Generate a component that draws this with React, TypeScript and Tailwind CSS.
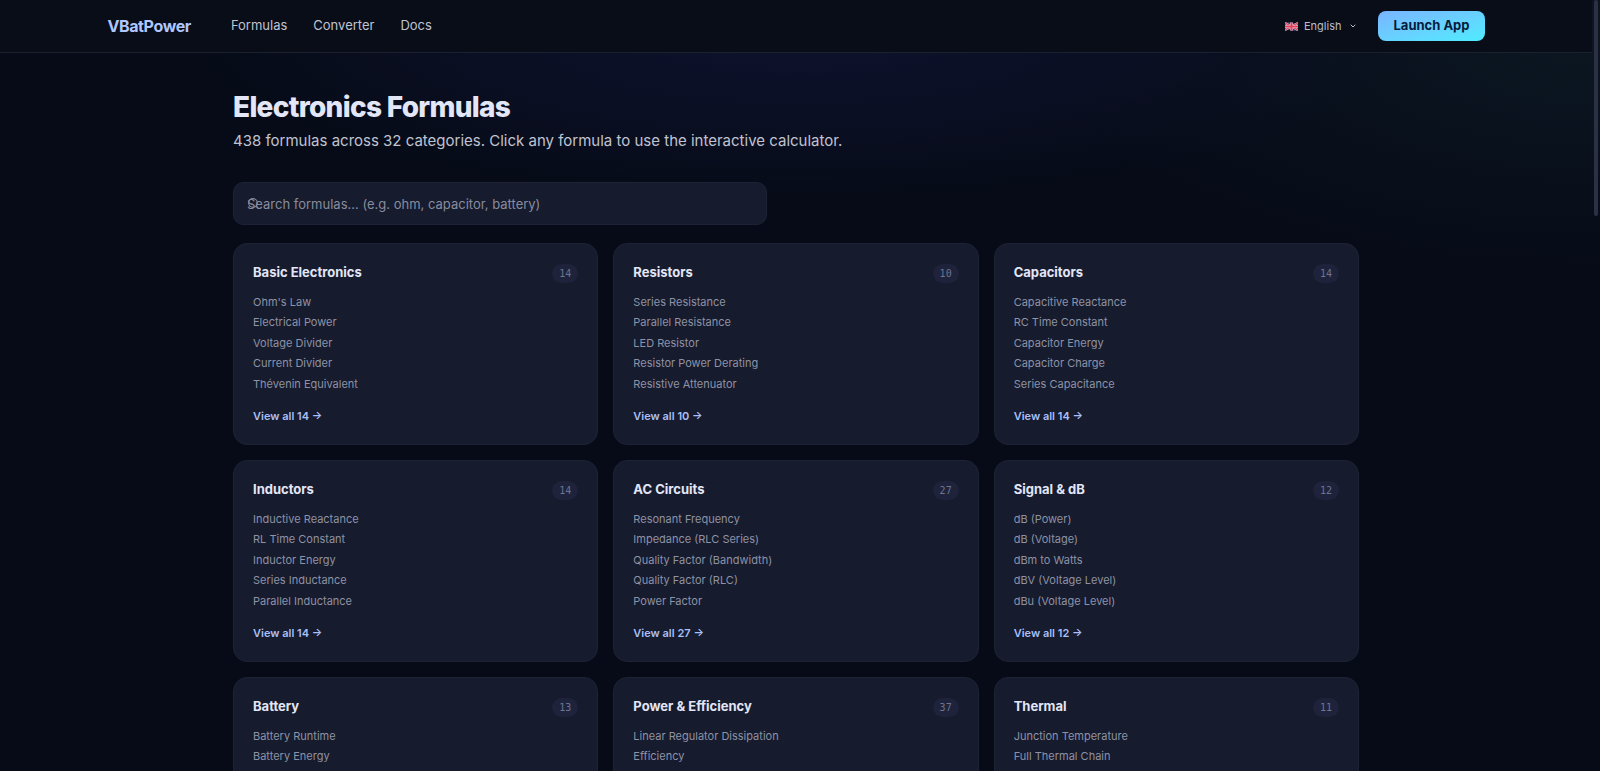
import React from "react";
import { ChevronDown, Search } from "lucide-react";

type Category = { name: string; count: number; formulas: string[] };

const PREVIEW_SIZE = 5;

const categories: Category[] = [
  { name: "Basic Electronics", count: 14, formulas: ["Ohm's Law", "Electrical Power", "Voltage Divider", "Current Divider", "Thévenin Equivalent"] },
  { name: "Resistors", count: 10, formulas: ["Series Resistance", "Parallel Resistance", "LED Resistor", "Resistor Power Derating", "Resistive Attenuator"] },
  { name: "Capacitors", count: 14, formulas: ["Capacitive Reactance", "RC Time Constant", "Capacitor Energy", "Capacitor Charge", "Series Capacitance"] },
  { name: "Inductors", count: 14, formulas: ["Inductive Reactance", "RL Time Constant", "Inductor Energy", "Series Inductance", "Parallel Inductance"] },
  { name: "AC Circuits", count: 27, formulas: ["Resonant Frequency", "Impedance (RLC Series)", "Quality Factor (Bandwidth)", "Quality Factor (RLC)", "Power Factor"] },
  { name: "Signal & dB", count: 12, formulas: ["dB (Power)", "dB (Voltage)", "dBm to Watts", "dBV (Voltage Level)", "dBu (Voltage Level)"] },
  { name: "Battery", count: 13, formulas: ["Battery Runtime", "Battery Energy"] },
  { name: "Power & Efficiency", count: 37, formulas: ["Linear Regulator Dissipation", "Efficiency"] },
  { name: "Thermal", count: 11, formulas: ["Junction Temperature", "Full Thermal Chain"] },
];

function Flag() {
  return (
    <svg className="h-[9px] w-[13px]" viewBox="0 0 60 40" aria-hidden="true">
      <path d="M0 3Q15-2 30 3T60 3V37Q45 42 30 37T0 37Z" fill="#33417f" />
      <path d="M0 3L60 37M60 3L0 37" stroke="#e4d3dc" strokeWidth="9" />
      <path d="M0 3L60 37M60 3L0 37" stroke="#e0405c" strokeWidth="5" />
      <path d="M30 1V39M0 20H60" stroke="#e4d3dc" strokeWidth="13" />
      <path d="M30 1V39M0 20H60" stroke="#e0405c" strokeWidth="9" />
    </svg>
  );
}

function Header() {
  return (
    <header className="border-b border-[#1b2130] bg-[#080d18]">
      <div className="mx-auto flex h-[52px] max-w-[1377px] items-center">
        <a href="#home" className="text-[16px] font-bold tracking-tight text-[#b0c6ff]">VBatPower</a>
        <nav className="ml-10 flex gap-[26px] text-[13px] text-[#c0c3d0]">
          <a href="#formulas">Formulas</a>
          <a href="#converter">Converter</a>
          <a href="#docs">Docs</a>
        </nav>
        <button type="button" className="ml-auto flex items-center gap-[6px] text-[11px] text-[#b9bcca]">
          <Flag />
          English
          <ChevronDown className="ml-[2px] size-[8px]" strokeWidth={3} />
        </button>
        <a href="#app" className="ml-[21px] flex h-[30px] items-center rounded-lg bg-linear-to-br from-[#78b4ff] to-[#4cecff] px-[15px] text-[13px] font-bold text-[#071b3d]">
          Launch App
        </a>
      </div>
    </header>
  );
}

function CategoryCard({ name, count, formulas }: Category) {
  return (
    <article className="rounded-[14px] border border-[#1d2235] bg-[#161b2d] px-[19px] pt-[19px] pb-[19px]">
      <div className="flex h-5 items-center justify-between">
        <h2 className="text-[13px] font-bold text-[#e3e6f7]">{name}</h2>
        <span className="rounded-full bg-[#1e223a] px-[7px] font-['DejaVu_Sans_Mono',monospace] text-[10px] leading-[19px] text-[#6f7590]">{count}</span>
      </div>
      <ul className="mt-[9px] grid h-[102px] grid-rows-5 items-center text-[11px] text-[#8e92a5]">
        {formulas.map((f) => (
          <li key={f}>
            <a href="#formula">{f}</a>
          </li>
        ))}
      </ul>
      {formulas.length === PREVIEW_SIZE && (
        <a href="#category" className="mt-[13px] block text-[11px] leading-[18px] font-semibold text-[#a9bff5]">
          View all {count} →
        </a>
      )}
    </article>
  );
}

export default function App() {
  return (
    <div className="flex h-screen overflow-hidden bg-[#060b17] bg-[radial-gradient(ellipse_620px_170px_at_50%_30px,#0e122c_0%,#0b0f24_50%,transparent_100%),radial-gradient(ellipse_560px_230px_at_100%_40px,#0c1722_0%,transparent_100%)] font-['Inter',sans-serif]">
      <div className="min-w-0 flex-1">
        <Header />
        <main className="mx-auto max-w-[1126px] pt-9">
          <h1 className="text-[28px] leading-[36px] font-extrabold tracking-tight text-[#e3e6f7]">Electronics Formulas</h1>
          <p className="mt-[4px] text-[15px] leading-[24px] text-[#c0c3d0]">
            438 formulas across 32 categories. Click any formula to use the interactive calculator.
          </p>
          <div className="relative mt-[29px] max-w-[534px]">
            <Search className="absolute top-[15px] left-[14px] size-[13px] text-[#8a8ea3]" strokeWidth={2} />
            <input
              type="search"
              aria-label="Search formulas"
              placeholder="Search formulas... (e.g. ohm, capacitor, battery)"
              className="block h-[43px] w-full rounded-[10px] border border-[#1d2235] bg-[#161b2d] px-[13px] text-[13px] text-[#e3e6f7] placeholder:text-[#888c9f]"
            />
          </div>
          <div className="mt-[18px] grid grid-cols-3 gap-[15px]">
            {categories.map((c) => (
              <CategoryCard key={c.name} {...c} />
            ))}
          </div>
        </main>
      </div>
      <div className="flex w-2 justify-center" aria-hidden="true">
        <div className="h-[28%] w-1 rounded-full bg-[#2b3045]" />
      </div>
    </div>
  );
}
